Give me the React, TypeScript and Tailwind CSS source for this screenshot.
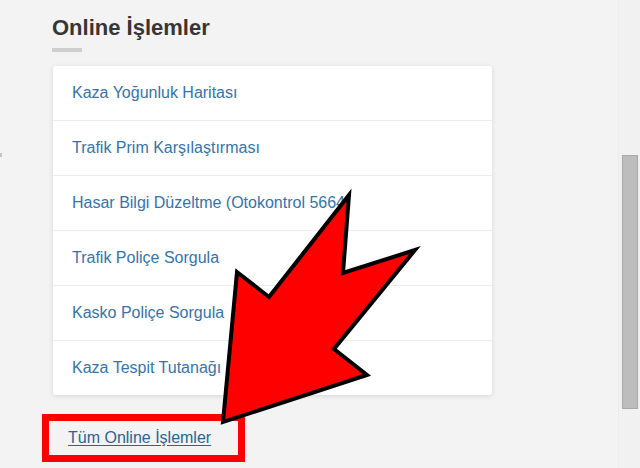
import React from "react";

const items = [
  "Kaza Yoğunluk Haritası",
  "Trafik Prim Karşılaştırması",
  "Hasar Bilgi Düzeltme (Otokontrol 5664)",
  "Trafik Poliçe Sorgula",
  "Kasko Poliçe Sorgula",
  "Kaza Tespit Tutanağı",
];

function PointerArrow() {
  return (
    <svg
      className="pointer-events-none absolute left-0 top-0"
      width="640"
      height="468"
      viewBox="0 0 640 468"
    >
      <polygon
        points="223,422 237,272 269,297 349,195 343,273 415,250 334,349 367,375"
        fill="#ff0000"
        stroke="#000000"
        strokeWidth="4"
        strokeLinejoin="miter"
      />
    </svg>
  );
}

export default function App() {
  return (
    <div
      className="relative flex h-[468px] w-[640px] overflow-hidden bg-[#f3f3f3]"
      style={{ fontFamily: '"Liberation Sans", Arial, sans-serif' }}
    >
      <span className="absolute left-0 top-[153px] h-[4px] w-[2px] bg-[#c4c4c4]" />

      <main className="flex flex-1 flex-col items-start pl-[52px] pt-[17px]">
        <h2 className="text-[22px] font-bold leading-[22px] text-[#363636]">
          Online İşlemler
        </h2>
        <div className="mt-[9px] h-[4px] w-[30px] bg-[#cfcfcf]" />

        <ul className="ml-px mt-[14px] w-[439px] rounded-[3px] bg-white shadow-[0_1px_5px_rgba(0,0,0,0.12)]">
          {items.map((label, i) => (
            <li
              key={label}
              className={
                i < items.length - 1
                  ? "flex h-[55px] items-center border-b border-[#ececec] pl-[19px]"
                  : "flex h-[54px] items-center pl-[19px]"
              }
            >
              <a className="text-[16px] leading-[16px] text-[#3474aa]" href="#">
                {label}
              </a>
            </li>
          ))}
        </ul>

        <div className="-ml-[10px] mt-[19px] w-[203px] border-[7px] border-[#ff0000] py-[9px] pl-[19px]">
          <a
            href="#"
            className="block text-[16px] leading-[16px] text-[#2a6496] underline underline-offset-[2px]"
          >
            Tüm Online İşlemler
          </a>
        </div>
      </main>

      <aside className="relative w-[22px] border-l border-[#ececec] bg-[#f1f1f1]">
        <div className="absolute left-[3px] top-[155px] h-[254px] w-[16px] border border-[#a9a9a9] bg-[#bdbdbd]" />
      </aside>

      <PointerArrow />
    </div>
  );
}
